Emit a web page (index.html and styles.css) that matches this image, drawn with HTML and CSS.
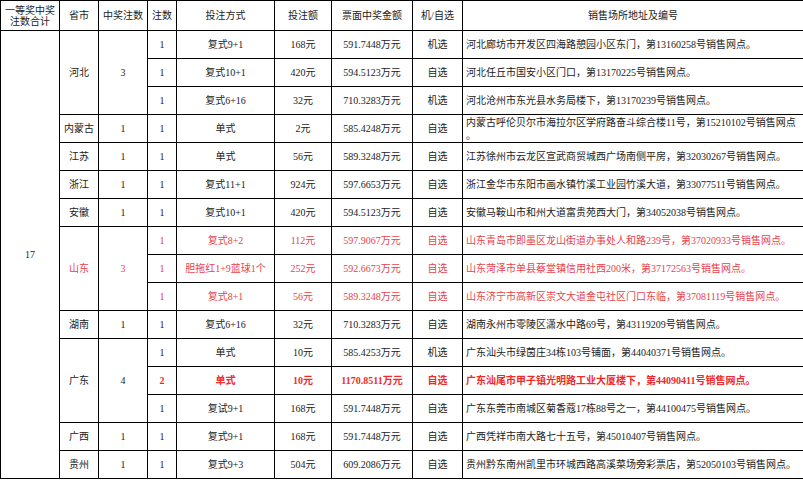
FILE: index.html
```html
<!DOCTYPE html>
<html lang="zh-CN">
<head>
<meta charset="utf-8">
<title>一等奖中奖情况</title>
<link rel="stylesheet" href="styles.css">
</head>
<body>
<table class="prize">
  <colgroup>
    <col class="c-total"><col class="c-prov"><col class="c-wins"><col class="c-bets"><col class="c-mode"><col class="c-amt"><col class="c-prize"><col class="c-pick"><col class="c-addr">
  </colgroup>
  <thead>
    <tr class="head">
      <th>一等奖中奖注数合计</th>
      <th>省市</th>
      <th>中奖注数</th>
      <th>注数</th>
      <th>投注方式</th>
      <th>投注额</th>
      <th>票面中奖金额</th>
      <th>机/自选</th>
      <th>销售场所地址及编号</th>
    </tr>
  </thead>
  <tbody>
    <tr>
      <td rowspan="16">17</td>
      <td rowspan="3">河北</td>
      <td rowspan="3">3</td>
      <td>1</td><td>复式9+1</td><td>168元</td><td>591.7448万元</td><td>机选</td>
      <td class="addr">河北廊坊市开发区四海路憩园小区东门，第13160258号销售网点。</td>
    </tr>
    <tr>
      <td>1</td><td>复式10+1</td><td>420元</td><td>594.5123万元</td><td>自选</td>
      <td class="addr">河北任丘市国安小区门口，第13170225号销售网点。</td>
    </tr>
    <tr>
      <td>1</td><td>复式6+16</td><td>32元</td><td>710.3283万元</td><td>机选</td>
      <td class="addr">河北沧州市东光县水务局楼下，第13170239号销售网点。</td>
    </tr>
    <tr>
      <td>内蒙古</td><td>1</td>
      <td>1</td><td>单式</td><td>2元</td><td>585.4248万元</td><td>自选</td>
      <td class="addr">内蒙古呼伦贝尔市海拉尔区学府路奋斗综合楼11号，第15210102号销售网点<br>。</td>
    </tr>
    <tr>
      <td>江苏</td><td>1</td>
      <td>1</td><td>单式</td><td>56元</td><td>589.3248万元</td><td>自选</td>
      <td class="addr">江苏徐州市云龙区宣武商贸城西广场南侧平房，第32030267号销售网点。</td>
    </tr>
    <tr>
      <td>浙江</td><td>1</td>
      <td>1</td><td>复式11+1</td><td>924元</td><td>597.6653万元</td><td>自选</td>
      <td class="addr">浙江金华市东阳市画水镇竹溪工业园竹溪大道，第33077511号销售网点。</td>
    </tr>
    <tr>
      <td>安徽</td><td>1</td>
      <td>1</td><td>复式10+1</td><td>420元</td><td>594.5123万元</td><td>自选</td>
      <td class="addr">安徽马鞍山市和州大道富贵苑西大门，第34052038号销售网点。</td>
    </tr>
    <tr class="red">
      <td rowspan="3">山东</td>
      <td rowspan="3">3</td>
      <td>1</td><td>复式8+2</td><td>112元</td><td>597.9067万元</td><td>自选</td>
      <td class="addr">山东青岛市即墨区龙山街道办事处人和路239号，第37020933号销售网点。</td>
    </tr>
    <tr class="red">
      <td>1</td><td>胆拖红1+9蓝球1个</td><td>252元</td><td>592.6673万元</td><td>自选</td>
      <td class="addr">山东菏泽市单县蔡堂镇信用社西200米，第37172563号销售网点。</td>
    </tr>
    <tr class="red">
      <td>1</td><td>复式8+1</td><td>56元</td><td>589.3248万元</td><td>自选</td>
      <td class="addr">山东济宁市高新区崇文大道金屯社区门口东临，第37081119号销售网点。</td>
    </tr>
    <tr>
      <td>湖南</td><td>1</td>
      <td>1</td><td>复式6+16</td><td>32元</td><td>710.3283万元</td><td>自选</td>
      <td class="addr">湖南永州市零陵区潇水中路69号，第43119209号销售网点。</td>
    </tr>
    <tr>
      <td rowspan="3">广东</td>
      <td rowspan="3">4</td>
      <td>1</td><td>单式</td><td>10元</td><td>585.4253万元</td><td>机选</td>
      <td class="addr">广东汕头市绿茵庄34栋103号铺面，第44040371号销售网点。</td>
    </tr>
    <tr class="hot">
      <td>2</td><td>单式</td><td>10元</td><td>1170.8511万元</td><td>自选</td>
      <td class="addr">广东汕尾市甲子镇光明路工业大厦楼下，第44090411号销售网点。</td>
    </tr>
    <tr>
      <td>1</td><td>复试9+1</td><td>168元</td><td>591.7448万元</td><td>自选</td>
      <td class="addr">广东东莞市南城区菊香蔻17栋88号之一，第44100475号销售网点。</td>
    </tr>
    <tr>
      <td>广西</td><td>1</td>
      <td>1</td><td>复式9+1</td><td>168元</td><td>591.7448万元</td><td>自选</td>
      <td class="addr">广西凭祥市南大路七十五号，第45010407号销售网点。</td>
    </tr>
    <tr>
      <td>贵州</td><td>1</td>
      <td>1</td><td>复式9+3</td><td>504元</td><td>609.2086万元</td><td>自选</td>
      <td class="addr">贵州黔东南州凯里市环城西路高溪菜场旁彩票店，第52050103号销售网点。</td>
    </tr>
  </tbody>
</table>
</body>
</html>
```

FILE: styles.css
```css
html, body {
  margin: 0;
  padding: 0;
  background: #ffffff;
}

.prize {
  border-collapse: collapse;
  table-layout: fixed;
  width: 803px;
  font-family: "Liberation Serif", "Noto Sans CJK SC", serif;
  font-size: 10px;
  line-height: 13px;
  color: #222222;
}

.c-total { width: 59px; }
.c-prov  { width: 39px; }
.c-wins  { width: 49px; }
.c-bets  { width: 29px; }
.c-mode  { width: 98px; }
.c-amt   { width: 57px; }
.c-prize { width: 81px; }
.c-pick  { width: 50px; }
.c-addr  { width: 341px; }

.prize th,
.prize td {
  border: 1px solid #000000;
  padding: 0;
  text-align: center;
  vertical-align: middle;
  font-weight: normal;
  white-space: nowrap;
}

.prize th:first-child {
  white-space: normal;
  padding: 0 4px;
  line-height: 11px;
}

.head { height: 30px; }
.prize tbody tr { height: 28px; }

.prize td.addr {
  text-align: left;
  padding-left: 3px;
}

.red td { color: #e8424c; }

.hot td {
  color: #f02a2a;
  font-weight: bold;
}
```
